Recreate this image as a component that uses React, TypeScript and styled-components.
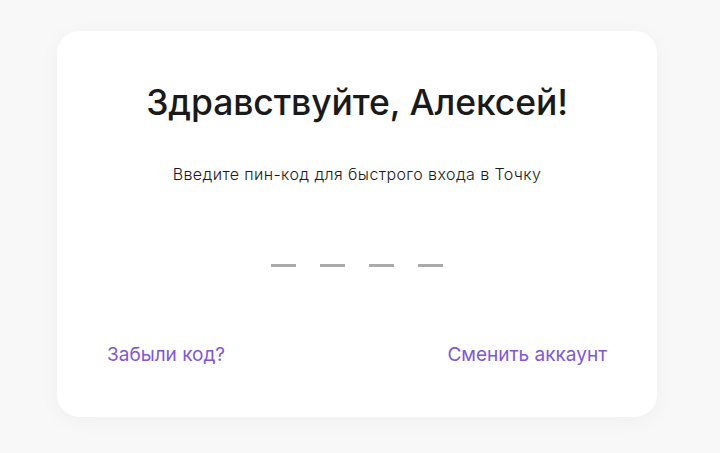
import React from "react";
import styled, { createGlobalStyle } from "styled-components";

const Global = createGlobalStyle`
  html, body { margin: 0; padding: 0; background: #f8f8f8; }
  body { font-family: Inter, "Noto Sans", sans-serif; }
`;

const Page = styled.div`
  width: 720px;
  height: 453px;
  padding: 31px 6px 0 0;
  box-sizing: border-box;
  display: flex;
  justify-content: center;
`;

const Card = styled.div`
  width: 600px;
  height: 386px;
  box-sizing: border-box;
  background: #ffffff;
  border-radius: 22px;
  box-shadow: 0 4px 20px rgba(0, 0, 0, 0.04);
  padding: 50px 50px 0;
  display: flex;
  flex-direction: column;
  align-items: center;
`;

const Title = styled.h1`
  margin: 0;
  font-size: 35.5px;
  font-weight: 500;
  line-height: 44px;
  color: #1a1a1a;
  letter-spacing: -0.1px;
`;

const Subtitle = styled.p`
  margin: 39px 0 0;
  font-size: 16px;
  font-weight: 300;
  line-height: 20px;
  color: #1a1a1a;
  letter-spacing: 0.4px;
`;

const Dashes = styled.div`
  display: flex;
  gap: 24px;
  margin-top: 80px;
  height: 3px;
`;

const Dash = styled.span`
  width: 25px;
  height: 3px;
  background: #aaaaaa;
`;

const Footer = styled.div`
  align-self: stretch;
  display: flex;
  justify-content: space-between;
  margin-top: 76px;
`;

const LinkText = styled.a`
  font-size: 19px;
  font-weight: 400;
  line-height: 24px;
  color: #8056e0;
  text-decoration: none;
  cursor: pointer;
`;

export default function App() {
  return (
    <>
      <Global />
      <Page>
        <Card>
          <Title>Здравствуйте, Алексей!</Title>
          <Subtitle>Введите пин-код для быстрого входа в Точку</Subtitle>
          <Dashes>
            {[0, 1, 2, 3].map((i) => (
              <Dash key={i} />
            ))}
          </Dashes>
          <Footer>
            <LinkText>Забыли код?</LinkText>
            <LinkText>Сменить аккаунт</LinkText>
          </Footer>
        </Card>
      </Page>
    </>
  );
}
